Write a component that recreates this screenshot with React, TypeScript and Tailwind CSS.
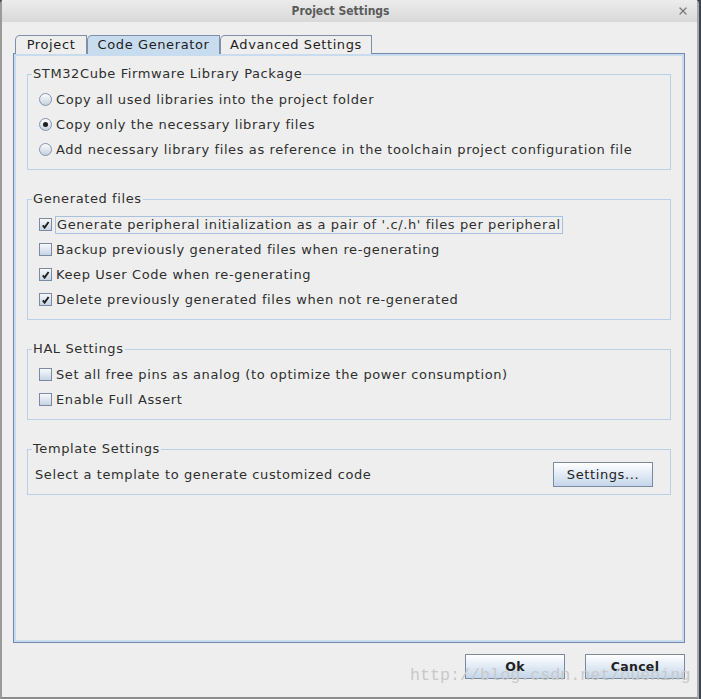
import React from 'react'
import { X } from 'lucide-react'

const Radio = ({ on }: { on?: boolean }) => (
  <span className="flex h-[13px] w-[13px] shrink-0 items-center justify-center rounded-full border border-[#8494ab] bg-gradient-to-b from-[#fbfcfe] to-[#c6d2e0]">
    {on && <span className="h-[5px] w-[5px] rounded-full bg-[#1c1c1c]" />}
  </span>
)

const Check = ({ on }: { on?: boolean }) => (
  <span className="flex h-[13px] w-[13px] shrink-0 items-center justify-center border border-[#7b8aa0] bg-gradient-to-b from-[#f7f9fc] to-[#c6d4e4]">
    {on && (
      <svg width="9" height="9" viewBox="0 0 9 9">
        <path d="M1.8 5.4 L3.6 7.6 L7.6 2" fill="none" stroke="#1e1e1e" strokeWidth="1.9" />
      </svg>
    )}
  </span>
)

const Group = ({ title, children }: { title: string; children: React.ReactNode }) => (
  <fieldset className="border border-[#bad0e7]">
    <legend className="ml-[4px] px-[1px]">{title}</legend>
    <div className="pt-[5px] pb-[7px]">{children}</div>
  </fieldset>
)

const Row = ({ children }: { children: React.ReactNode }) => (
  <div className="flex h-[25px] items-center gap-[4px] pl-[11px]">{children}</div>
)

const JButton = ({ label, bold }: { label: string; bold?: boolean }) => (
  <button
    className={`h-[25px] w-[100px] border border-[#7889a0] bg-gradient-to-b from-white to-[#c4d6ea] text-[#222] ${
      bold ? 'text-[12.5px] font-bold tracking-[0.3px]' : ''
    }`}
  >
    {label}
  </button>
)

export default function App() {
  return (
    <div className="relative h-[699px] w-[701px] overflow-hidden bg-[#3c4452] font-['DejaVu_Sans',sans-serif] text-[13px] leading-[16px] tracking-[0.6px] text-[#2e2e2e]">
      <div className="flex h-[699px] w-[699px] flex-col rounded-t-[4px] border-x-2 border-b-2 border-l-[#9a9a9a] border-r-[#a8a8a8] border-b-[#8c8c8c] bg-[#eeeeee]">
        {/* title bar */}
        <div className="flex h-[22px] shrink-0 items-center bg-gradient-to-b from-[#ececec] to-[#d8d8d8] pl-[10px]">
          <div className="flex-1 text-center font-['DejaVu_Sans_Condensed','DejaVu_Sans',sans-serif] text-[12px] font-bold tracking-normal text-[#5b5b5b]">
            Project Settings
          </div>
          <div className="flex w-[28px] justify-center text-[#7a7a7a]">
            <X size={12} strokeWidth={2.6} />
          </div>
        </div>

        <div className="flex flex-1 flex-col pl-[11px] pr-[12px] pt-[13px]">
          {/* tabs */}
          <div className="relative z-10 -mb-px flex h-[19px] pl-[2px]">
            <div className="flex w-[72px] items-center justify-center rounded-tl-[5px] border border-b-0 border-[#7f8fa8] bg-[#eeeeee] text-[#1e1e1e]">
              Project
            </div>
            <div className="flex w-[133px] items-center justify-center rounded-tl-[5px] border border-b-0 border-[#7f8fa8] bg-[#c8dcf0] text-[#1e1e1e]">
              Code Generator
            </div>
            <div className="flex w-[152px] items-center justify-center rounded-tl-[5px] border border-b-0 border-[#7f8fa8] bg-[#eeeeee] text-[#1e1e1e]">
              Advanced Settings
            </div>
          </div>

          {/* tab panel */}
          <div className="h-[590px] w-[672px] border border-[#7289ad]">
            <div className="flex h-full flex-col gap-[21px] border-2 border-[#c8dbef] px-[11px] pt-[10px]">
              <Group title="STM32Cube Firmware Library Package">
                <Row>
                  <Radio />
                  <span>Copy all used libraries into the project folder</span>
                </Row>
                <Row>
                  <Radio on />
                  <span>Copy only the necessary library files</span>
                </Row>
                <Row>
                  <Radio />
                  <span>Add necessary library files as reference in the toolchain project configuration file</span>
                </Row>
              </Group>

              <Group title="Generated files">
                <Row>
                  <Check on />
                  <span className="-ml-[1px] border border-[#a9c1dd] px-[1px] leading-[16px]">
                    Generate peripheral initialization as a pair of '.c/.h' files per peripheral
                  </span>
                </Row>
                <Row>
                  <Check />
                  <span>Backup previously generated files when re-generating</span>
                </Row>
                <Row>
                  <Check on />
                  <span>Keep User Code when re-generating</span>
                </Row>
                <Row>
                  <Check on />
                  <span>Delete previously generated files when not re-generated</span>
                </Row>
              </Group>

              <Group title="HAL Settings">
                <Row>
                  <Check />
                  <span>Set all free pins as analog (to optimize the power consumption)</span>
                </Row>
                <Row>
                  <Check />
                  <span>Enable Full Assert</span>
                </Row>
              </Group>

              <Group title="Template Settings">
                <div className="flex h-[25px] items-center justify-between pl-[7px] pr-[17px]">
                  <span>Select a template to generate customized code</span>
                  <JButton label="Settings..." />
                </div>
              </Group>
            </div>
          </div>

          {/* dialog buttons */}
          <div className="mt-[11px] flex justify-end gap-[20px]">
            <JButton label="Ok" bold />
            <JButton label="Cancel" bold />
          </div>
        </div>
      </div>

      {/* watermark */}
      <div className="pointer-events-none absolute left-[410px] top-[664px] font-['Liberation_Mono',monospace] text-[16.7px] leading-[24px] tracking-normal text-[#c9c9c9]">
        http://blog.csdn.net/ouening
      </div>
    </div>
  )
}
